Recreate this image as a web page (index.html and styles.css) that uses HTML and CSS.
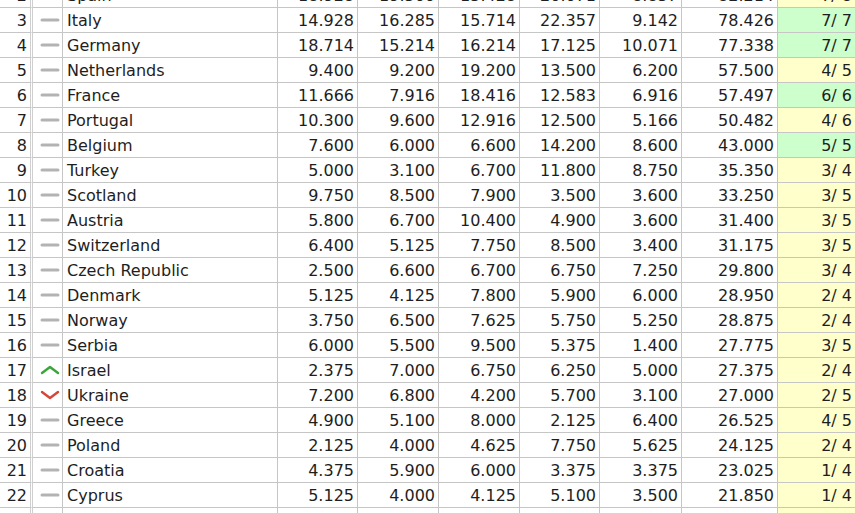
FILE: index.html
```html
<!DOCTYPE html>
<html>
<head>
<meta charset="utf-8">
<link rel="stylesheet" href="styles.css">
</head>
<body>
<div class="viewport">
<table class="ranking">
<tbody>
<tr><td class="rank">2</td><td class="trend"><svg class="ico" viewBox="0 0 22 10"><line x1="3" y1="5" x2="19" y2="5" class="dash"/></svg></td><td class="name">Spain</td><td class="num">18.928</td><td class="num">19.500</td><td class="num">15.428</td><td class="num">20.071</td><td class="num">8.857</td><td class="num tot">82.214</td><td class="cnt partial">7/ 8</td></tr>
<tr><td class="rank">3</td><td class="trend"><svg class="ico" viewBox="0 0 22 10"><line x1="3" y1="5" x2="19" y2="5" class="dash"/></svg></td><td class="name">Italy</td><td class="num">14.928</td><td class="num">16.285</td><td class="num">15.714</td><td class="num">22.357</td><td class="num">9.142</td><td class="num tot">78.426</td><td class="cnt full">7/ 7</td></tr>
<tr><td class="rank">4</td><td class="trend"><svg class="ico" viewBox="0 0 22 10"><line x1="3" y1="5" x2="19" y2="5" class="dash"/></svg></td><td class="name">Germany</td><td class="num">18.714</td><td class="num">15.214</td><td class="num">16.214</td><td class="num">17.125</td><td class="num">10.071</td><td class="num tot">77.338</td><td class="cnt full">7/ 7</td></tr>
<tr><td class="rank">5</td><td class="trend"><svg class="ico" viewBox="0 0 22 10"><line x1="3" y1="5" x2="19" y2="5" class="dash"/></svg></td><td class="name">Netherlands</td><td class="num">9.400</td><td class="num">9.200</td><td class="num">19.200</td><td class="num">13.500</td><td class="num">6.200</td><td class="num tot">57.500</td><td class="cnt partial">4/ 5</td></tr>
<tr><td class="rank">6</td><td class="trend"><svg class="ico" viewBox="0 0 22 10"><line x1="3" y1="5" x2="19" y2="5" class="dash"/></svg></td><td class="name">France</td><td class="num">11.666</td><td class="num">7.916</td><td class="num">18.416</td><td class="num">12.583</td><td class="num">6.916</td><td class="num tot">57.497</td><td class="cnt full">6/ 6</td></tr>
<tr><td class="rank">7</td><td class="trend"><svg class="ico" viewBox="0 0 22 10"><line x1="3" y1="5" x2="19" y2="5" class="dash"/></svg></td><td class="name">Portugal</td><td class="num">10.300</td><td class="num">9.600</td><td class="num">12.916</td><td class="num">12.500</td><td class="num">5.166</td><td class="num tot">50.482</td><td class="cnt partial">4/ 6</td></tr>
<tr><td class="rank">8</td><td class="trend"><svg class="ico" viewBox="0 0 22 10"><line x1="3" y1="5" x2="19" y2="5" class="dash"/></svg></td><td class="name">Belgium</td><td class="num">7.600</td><td class="num">6.000</td><td class="num">6.600</td><td class="num">14.200</td><td class="num">8.600</td><td class="num tot">43.000</td><td class="cnt full">5/ 5</td></tr>
<tr><td class="rank">9</td><td class="trend"><svg class="ico" viewBox="0 0 22 10"><line x1="3" y1="5" x2="19" y2="5" class="dash"/></svg></td><td class="name">Turkey</td><td class="num">5.000</td><td class="num">3.100</td><td class="num">6.700</td><td class="num">11.800</td><td class="num">8.750</td><td class="num tot">35.350</td><td class="cnt partial">3/ 4</td></tr>
<tr><td class="rank">10</td><td class="trend"><svg class="ico" viewBox="0 0 22 10"><line x1="3" y1="5" x2="19" y2="5" class="dash"/></svg></td><td class="name">Scotland</td><td class="num">9.750</td><td class="num">8.500</td><td class="num">7.900</td><td class="num">3.500</td><td class="num">3.600</td><td class="num tot">33.250</td><td class="cnt partial">3/ 5</td></tr>
<tr><td class="rank">11</td><td class="trend"><svg class="ico" viewBox="0 0 22 10"><line x1="3" y1="5" x2="19" y2="5" class="dash"/></svg></td><td class="name">Austria</td><td class="num">5.800</td><td class="num">6.700</td><td class="num">10.400</td><td class="num">4.900</td><td class="num">3.600</td><td class="num tot">31.400</td><td class="cnt partial">3/ 5</td></tr>
<tr><td class="rank">12</td><td class="trend"><svg class="ico" viewBox="0 0 22 10"><line x1="3" y1="5" x2="19" y2="5" class="dash"/></svg></td><td class="name">Switzerland</td><td class="num">6.400</td><td class="num">5.125</td><td class="num">7.750</td><td class="num">8.500</td><td class="num">3.400</td><td class="num tot">31.175</td><td class="cnt partial">3/ 5</td></tr>
<tr><td class="rank">13</td><td class="trend"><svg class="ico" viewBox="0 0 22 10"><line x1="3" y1="5" x2="19" y2="5" class="dash"/></svg></td><td class="name">Czech Republic</td><td class="num">2.500</td><td class="num">6.600</td><td class="num">6.700</td><td class="num">6.750</td><td class="num">7.250</td><td class="num tot">29.800</td><td class="cnt partial">3/ 4</td></tr>
<tr><td class="rank">14</td><td class="trend"><svg class="ico" viewBox="0 0 22 10"><line x1="3" y1="5" x2="19" y2="5" class="dash"/></svg></td><td class="name">Denmark</td><td class="num">5.125</td><td class="num">4.125</td><td class="num">7.800</td><td class="num">5.900</td><td class="num">6.000</td><td class="num tot">28.950</td><td class="cnt partial">2/ 4</td></tr>
<tr><td class="rank">15</td><td class="trend"><svg class="ico" viewBox="0 0 22 10"><line x1="3" y1="5" x2="19" y2="5" class="dash"/></svg></td><td class="name">Norway</td><td class="num">3.750</td><td class="num">6.500</td><td class="num">7.625</td><td class="num">5.750</td><td class="num">5.250</td><td class="num tot">28.875</td><td class="cnt partial">2/ 4</td></tr>
<tr><td class="rank">16</td><td class="trend"><svg class="ico" viewBox="0 0 22 10"><line x1="3" y1="5" x2="19" y2="5" class="dash"/></svg></td><td class="name">Serbia</td><td class="num">6.000</td><td class="num">5.500</td><td class="num">9.500</td><td class="num">5.375</td><td class="num">1.400</td><td class="num tot">27.775</td><td class="cnt partial">3/ 5</td></tr>
<tr><td class="rank">17</td><td class="trend"><svg class="ico" viewBox="0 0 22 10"><polyline points="3,8 11,2 19,8" class="up"/></svg></td><td class="name">Israel</td><td class="num">2.375</td><td class="num">7.000</td><td class="num">6.750</td><td class="num">6.250</td><td class="num">5.000</td><td class="num tot">27.375</td><td class="cnt partial">2/ 4</td></tr>
<tr><td class="rank">18</td><td class="trend"><svg class="ico" viewBox="0 0 22 10"><polyline points="3,2 11,8 19,2" class="down"/></svg></td><td class="name">Ukraine</td><td class="num">7.200</td><td class="num">6.800</td><td class="num">4.200</td><td class="num">5.700</td><td class="num">3.100</td><td class="num tot">27.000</td><td class="cnt partial">2/ 5</td></tr>
<tr><td class="rank">19</td><td class="trend"><svg class="ico" viewBox="0 0 22 10"><line x1="3" y1="5" x2="19" y2="5" class="dash"/></svg></td><td class="name">Greece</td><td class="num">4.900</td><td class="num">5.100</td><td class="num">8.000</td><td class="num">2.125</td><td class="num">6.400</td><td class="num tot">26.525</td><td class="cnt partial">4/ 5</td></tr>
<tr><td class="rank">20</td><td class="trend"><svg class="ico" viewBox="0 0 22 10"><line x1="3" y1="5" x2="19" y2="5" class="dash"/></svg></td><td class="name">Poland</td><td class="num">2.125</td><td class="num">4.000</td><td class="num">4.625</td><td class="num">7.750</td><td class="num">5.625</td><td class="num tot">24.125</td><td class="cnt partial">2/ 4</td></tr>
<tr><td class="rank">21</td><td class="trend"><svg class="ico" viewBox="0 0 22 10"><line x1="3" y1="5" x2="19" y2="5" class="dash"/></svg></td><td class="name">Croatia</td><td class="num">4.375</td><td class="num">5.900</td><td class="num">6.000</td><td class="num">3.375</td><td class="num">3.375</td><td class="num tot">23.025</td><td class="cnt partial">1/ 4</td></tr>
<tr><td class="rank">22</td><td class="trend"><svg class="ico" viewBox="0 0 22 10"><line x1="3" y1="5" x2="19" y2="5" class="dash"/></svg></td><td class="name">Cyprus</td><td class="num">5.125</td><td class="num">4.000</td><td class="num">4.125</td><td class="num">5.100</td><td class="num">3.500</td><td class="num tot">21.850</td><td class="cnt partial">1/ 4</td></tr>
<tr><td class="rank">23</td><td class="trend"><svg class="ico" viewBox="0 0 22 10"><line x1="3" y1="5" x2="19" y2="5" class="dash"/></svg></td><td class="name">Hungary</td><td class="num">3.000</td><td class="num">4.250</td><td class="num">3.500</td><td class="num">4.500</td><td class="num">5.600</td><td class="num tot">20.850</td><td class="cnt partial">2/ 4</td></tr>
</tbody>
</table>
</div>
</body>
</html>
```

FILE: styles.css
```css
html, body {
  margin: 0;
  padding: 0;
  background: #ffffff;
  overflow: hidden;
}
.viewport {
  width: 855px;
  height: 513px;
  overflow: hidden;
}
.ranking {
  margin-top: -17px;
  border-collapse: separate;
  border-spacing: 0;
  table-layout: fixed;
  width: 856px;
  font-family: "DejaVu Sans", Verdana, sans-serif;
  font-size: 16px;
  color: #1e1e1e;
}
.ranking td {
  box-sizing: border-box;
  height: 25px;
  padding: 1px 3px 0 4px;
  line-height: 23px;
  border-bottom: 1px solid #c6c6c6;
  border-right: 1px solid #c6c6c6;
  white-space: pre;
  overflow: hidden;
  vertical-align: middle;
}
.ranking td.rank {
  width: 33px;
  text-align: right;
  border-right: 3px double #cfcfcf;
  padding-right: 3px;
}
.ranking td.trend {
  width: 30px;
  padding: 0 0 0 6px;
  line-height: 0;
}
.ranking td.name {
  width: 215px;
  padding-left: 4px;
}
.ranking td.num {
  width: 81px;
  text-align: right;
}
.ranking td.num:nth-child(4) { width: 80px; }
.ranking td.num:nth-child(7) { width: 80px; }
.ranking td.num:nth-child(8) { width: 82px; }
.ranking td.tot { width: 96px; }
.ranking td.cnt {
  width: 79px;
  text-align: right;
  padding-right: 4px;
}
.cnt.full { background: #ccffcc; }
.cnt.partial { background: #ffffcc; }
.ico {
  width: 22px;
  height: 10px;
  display: block;
}
.dash {
  stroke: #b3b3b3;
  stroke-width: 3;
  stroke-linecap: round;
}
.up {
  fill: none;
  stroke: #3aa53a;
  stroke-width: 2.4;
  stroke-linecap: round;
  stroke-linejoin: round;
}
.down {
  fill: none;
  stroke: #d4463a;
  stroke-width: 2.4;
  stroke-linecap: round;
  stroke-linejoin: round;
}
```
